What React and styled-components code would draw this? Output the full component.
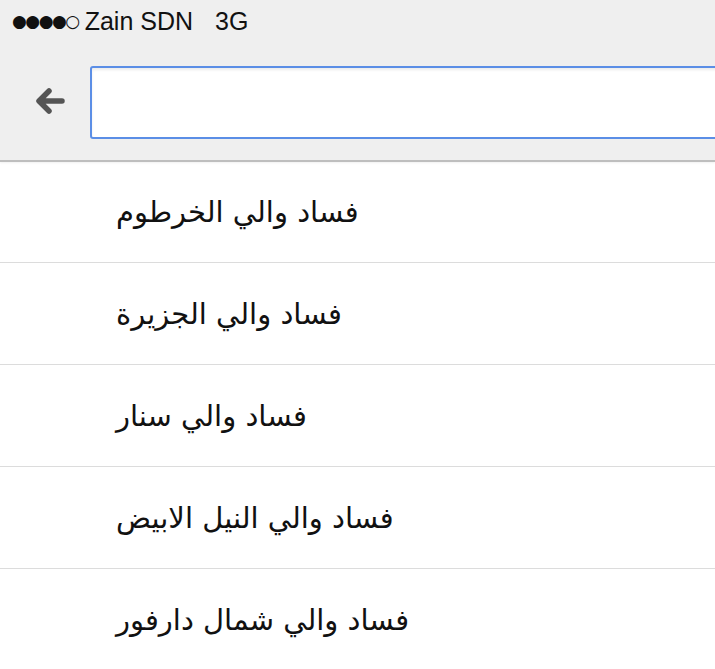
import React from 'react';
import styled, { createGlobalStyle } from 'styled-components';

const GlobalStyle = createGlobalStyle`
  html, body {
    margin: 0;
    padding: 0;
    background: #ffffff;
  }
  body {
    font-family: 'Liberation Sans', Arial, sans-serif;
    overflow: hidden;
  }
`;

const items = [
  'فساد والي الخرطوم',
  'فساد والي الجزيرة',
  'فساد والي سنار',
  'فساد والي النيل الابيض',
  'فساد والي شمال دارفور',
];

const App = () => {
  return (
    <Screen>
      <GlobalStyle />
      <Header>
        <StatusBar>
          <span className='signal'>●●●●○</span>
          <span>Zain SDN</span>
          <span className='network'>3G</span>
        </StatusBar>
        <Toolbar>
          <BackButton aria-label='back'>
            <svg width='30' height='28' viewBox='0 0 30 28'>
              <path
                d='M27 14 H5 M14 4 L4 14 L14 24'
                fill='none'
                stroke='#555555'
                strokeWidth='5.5'
                strokeLinecap='round'
                strokeLinejoin='round'
              />
            </svg>
          </BackButton>
          <SearchInput type='text' />
        </Toolbar>
      </Header>
      <List>
        {items.map((item) => (
          <Row key={item}>
            <span dir='rtl'>{item}</span>
          </Row>
        ))}
      </List>
    </Screen>
  );
};

export default App;

const headerGrey = '#efefef';
const focusBlue = '#5b8ee6';

const Screen = styled.div`
  width: 100%;
  height: 669px;
  overflow: hidden;
  background: #ffffff;
`;

const Header = styled.div`
  background-color: ${headerGrey};
  border-bottom: 2px solid #bebebe;
  box-shadow: 0 1px 2px rgba(0, 0, 0, 0.06);
  position: relative;
  z-index: 1;
`;

const StatusBar = styled.div`
  height: 44px;
  display: flex;
  align-items: center;
  gap: 6px;
  padding: 0 0 2px 12px;
  box-sizing: border-box;
  font-size: 25px;
  color: #111111;

  .signal {
    font-size: 17px;
    letter-spacing: -1.5px;
    font-family: 'DejaVu Sans', sans-serif;
  }

  .network {
    margin-left: 16px;
  }
`;

const Toolbar = styled.div`
  display: flex;
  align-items: center;
  padding: 22px 0 21px;
`;

const BackButton = styled.button`
  width: 90px;
  height: 73px;
  flex: none;
  border: none;
  background: transparent;
  display: flex;
  align-items: center;
  justify-content: center;
  padding: 0 0 4px 10px;
  margin: 0;
`;

const SearchInput = styled.input`
  flex: none;
  width: 660px;
  height: 73px;
  box-sizing: border-box;
  border: 2px solid ${focusBlue};
  border-radius: 3px;
  background: #ffffff;
  box-shadow: inset 0 2px 3px rgba(0, 0, 0, 0.08);
  outline: none;
  margin: 0;
  font-size: 26px;
`;

const List = styled.div`
  display: flex;
  flex-direction: column;
  margin-top: -1px;
`;

const Row = styled.div`
  height: 101px;
  border-bottom: 1px solid #dcdcdc;
  display: flex;
  align-items: center;
  padding-left: 116px;
  font-family: 'DejaVu Sans', 'Noto Sans', sans-serif;
  font-size: 29px;
  color: #111111;
`;
